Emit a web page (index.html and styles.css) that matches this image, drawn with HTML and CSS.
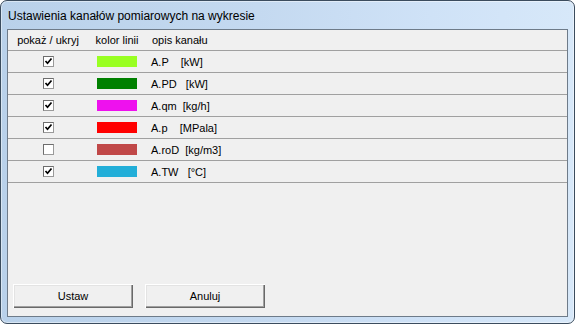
FILE: index.html
```
<!DOCTYPE html>
<html>
<head>
<meta charset="utf-8">
<link rel="stylesheet" href="styles.css">
</head>
<body>
<div class="window">
  <div class="titlebar"><span class="title">Ustawienia kanałów pomiarowych na wykresie</span></div>
  <div class="client">
    <div class="grid">
      <div class="row head">
        <div class="c1">pokaż / ukryj</div>
        <div class="c2">kolor linii</div>
        <div class="c3">opis kanału</div>
      </div>
      <div class="row">
        <div class="c1"><span class="cb on"><svg viewBox="0 0 9 9" width="9" height="9"><polyline points="1.5,4 3.5,6.3 7.5,1.5" fill="none" stroke="#000" stroke-width="1.7"/></svg></span></div>
        <div class="c2"><span class="sw sw-p"></span></div>
        <div class="c3">A.P    [kW]</div>
      </div>
      <div class="row">
        <div class="c1"><span class="cb on"><svg viewBox="0 0 9 9" width="9" height="9"><polyline points="1.5,4 3.5,6.3 7.5,1.5" fill="none" stroke="#000" stroke-width="1.7"/></svg></span></div>
        <div class="c2"><span class="sw sw-pd"></span></div>
        <div class="c3">A.PD   [kW]</div>
      </div>
      <div class="row">
        <div class="c1"><span class="cb on"><svg viewBox="0 0 9 9" width="9" height="9"><polyline points="1.5,4 3.5,6.3 7.5,1.5" fill="none" stroke="#000" stroke-width="1.7"/></svg></span></div>
        <div class="c2"><span class="sw sw-qm"></span></div>
        <div class="c3">A.qm  [kg/h]</div>
      </div>
      <div class="row">
        <div class="c1"><span class="cb on"><svg viewBox="0 0 9 9" width="9" height="9"><polyline points="1.5,4 3.5,6.3 7.5,1.5" fill="none" stroke="#000" stroke-width="1.7"/></svg></span></div>
        <div class="c2"><span class="sw sw-pp"></span></div>
        <div class="c3">A.p    [MPala]</div>
      </div>
      <div class="row">
        <div class="c1"><span class="cb"></span></div>
        <div class="c2"><span class="sw sw-rod"></span></div>
        <div class="c3">A.roD  [kg/m3]</div>
      </div>
      <div class="row">
        <div class="c1"><span class="cb on"><svg viewBox="0 0 9 9" width="9" height="9"><polyline points="1.5,4 3.5,6.3 7.5,1.5" fill="none" stroke="#000" stroke-width="1.7"/></svg></span></div>
        <div class="c2"><span class="sw sw-tw"></span></div>
        <div class="c3">A.TW   [°C]</div>
      </div>
    </div>
    <div class="buttons">
      <button class="btn">Ustaw</button>
      <button class="btn">Anuluj</button>
    </div>
  </div>
</div>
</body>
</html>
```
FILE: styles.css
```
html, body {
  margin: 0;
  padding: 0;
  background: #ffffff;
}
.window {
  width: 575px;
  height: 324px;
  box-sizing: border-box;
  border: 1px solid #3b4c5e;
  border-radius: 7px;
  background: linear-gradient(90deg, #b9d1ea 0%, #c4d9f0 45%, #cfe2f7 75%, #d7e8f9 100%);
  display: flex;
  flex-direction: column;
  box-shadow: inset 0 0 0 1px rgba(255,255,255,0.45);
  overflow: hidden;
}
.titlebar {
  height: 28px;
  flex: none;
  padding-left: 7px;
  display: flex;
  align-items: center;
}
.title {
  font-family: "Liberation Sans", Arial, sans-serif;
  font-size: 12px;
  color: #000;
  position: relative;
  top: 1px;
}
.client {
  margin: 0 6px 6px 6px;
  height: 288px;
  box-sizing: border-box;
  border: 1px solid #6e7b89;
  background: #f0f0f0;
  display: flex;
  flex-direction: column;
  font-family: "Liberation Sans", Arial, sans-serif;
  font-size: 11px;
  color: #000;
}
.grid {
  display: flex;
  flex-direction: column;
}
.row {
  display: flex;
  align-items: center;
  height: 21px;
  border-bottom: 1px solid #a0a0a0;
}
.row.head {
  height: 20px;
}
.c1 {
  width: 80px;
  display: flex;
  justify-content: center;
  align-items: center;
}
.c2 {
  width: 58px;
  display: flex;
  justify-content: center;
  align-items: center;
}
.c3 {
  padding-left: 5px;
  white-space: pre;
}
.head .c3 {
  padding-left: 6px;
}
.cb {
  width: 11px;
  height: 11px;
  box-sizing: border-box;
  border: 1px solid #6d6d6d;
  border-right-color: #9a9a9a;
  border-bottom-color: #9a9a9a;
  background: #fff;
  display: flex;
  align-items: center;
  justify-content: center;
  position: relative;
  top: 0px;
}
.cb svg {
  display: block;
}
.sw {
  width: 40px;
  height: 11px;
  display: block;
}
.sw-p { background: #99ff22; }
.sw-pd { background: #008000; }
.sw-qm { background: #ee11ee; }
.sw-pp { background: #ff0000; }
.sw-rod { background: #c04848; }
.sw-tw { background: #22aed8; }
.buttons {
  margin-top: auto;
  display: flex;
  gap: 12px;
  padding: 0 0 8px 5px;
}
.btn {
  width: 120px;
  height: 24px;
  margin: 0;
  padding: 0;
  border: none;
  background: #f0f0f0;
  font-family: "Liberation Sans", Arial, sans-serif;
  font-size: 11px;
  color: #000;
  box-shadow: inset 1px 1px 0 #ffffff, inset -1px -1px 0 #696969, inset -2px -2px 0 #a0a0a0, inset 2px 2px 0 #e3e3e3;
}
```
